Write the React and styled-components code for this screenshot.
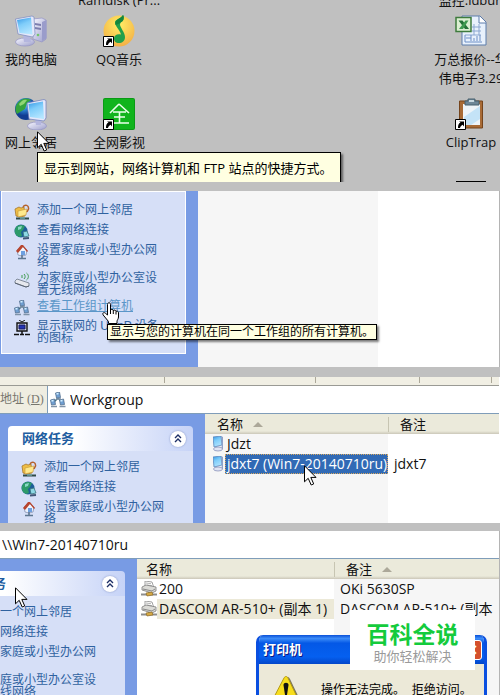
import styled, { createGlobalStyle } from 'styled-components';

const GlobalStyle = createGlobalStyle`
  * {
    box-sizing: border-box;
  }

  body {
    margin: 0;
    background: #c0c0c0;
    color: #111;
    font-family: "Open Sans", "Noto Sans CJK SC", sans-serif;
    font-size: 13px;
  }

  svg {
    display: block;
    flex: none;
  }
`;

const song = '"Liberation Sans", "Noto Sans CJK SC", sans-serif';

const Page = styled.main`
  display: flex;
  flex-direction: column;
  overflow: hidden;
`;

/* desktop */

const Desktop = styled.section`
  position: relative;
  display: flex;
  height: 182px;
  margin-bottom: 9px;
  overflow: hidden;
`;

const IconColumn = styled.div`
  display: flex;
  flex: none;
  flex-direction: column;
  width: ${(props) => props.$width}px;
  margin-left: ${(props) => (props.$last ? 'auto' : '0')};
  margin-right: ${(props) => (props.$last ? '-13px' : '0')};
`;

const CutLabel = styled.div`
  display: flex;
  flex: none;
  align-items: flex-end;
  justify-content: center;
  height: 15px;
  padding-bottom: 5px;
  line-height: 19px;
  white-space: nowrap;
`;

const Shortcut = styled.button`
  position: relative;
  display: flex;
  flex: none;
  flex-direction: column;
  align-items: center;
  gap: 3px;
  height: 83px;
  padding: 0;
  border: 0;
  background: none;
  color: inherit;
  font: inherit;
  line-height: 19px;
  white-space: nowrap;
`;

const Tooltip = styled.div`
  position: absolute;
  left: ${(props) => props.$x}px;
  top: ${(props) => props.$y}px;
  padding: ${(props) => (props.$large ? '6px 8px 8px 6px' : '0 2px')};
  border: 1px solid #000;
  background: #ffffe1;
  box-shadow: 2px 2px 2px rgba(0, 0, 0, 0.5);
  color: #000;
  font-family: ${(props) => (props.$large ? 'inherit' : song)};
  font-size: ${(props) => (props.$large ? 13 : 12)}px;
  line-height: ${(props) => (props.$large ? 19 : 14)}px;
  white-space: nowrap;
`;

const Pointer = styled.span`
  position: absolute;
  left: ${(props) => props.$x}px;
  top: ${(props) => props.$y}px;
  pointer-events: none;
`;

/* explorer windows */

const Explorer = styled.section`
  position: relative;
  height: ${(props) => props.$height}px;
  margin-bottom: ${(props) => props.$gap}px;
  border-right: 1px solid ${(props) => (props.$edge ? '#b4b4b4' : '#fff')};
  background: #fff;
  overflow: hidden;
`;

const Columns = styled.div`
  display: flex;
  height: 100%;
`;

const Sidebar = styled.aside`
  flex: none;
  width: ${(props) => props.$width}px;
  margin-left: ${(props) => props.$shift || 0}px;
  padding: ${(props) => props.$pad};
  background: #789be4;
`;

const Card = styled.div`
  border-radius: 4px 4px 0 0;
  overflow: hidden;
`;

const CardHead = styled.header`
  display: flex;
  align-items: center;
  justify-content: space-between;
  height: 25px;
  padding: 0 7px 0 14px;
  background: linear-gradient(90deg, #fff 35%, #c6d3f7);
`;

const CardTitle = styled.h2`
  margin: 0;
  color: #215da0;
  font: bold 13px/25px ${song};
`;

const Collapse = styled.button`
  display: flex;
  align-items: center;
  justify-content: center;
  width: 16px;
  height: 16px;
  padding: 0;
  border: 0;
  border-radius: 50%;
  background: #fff;
  box-shadow: 0 0 2px #7f8fc0;
`;

const TaskList = styled.ul`
  display: flex;
  flex-direction: column;
  gap: 4px;
  margin: 0;
  padding: ${(props) => (props.$open ? '12px 20px 9px 12px' : '10px 22px 10px 13px')};
  border: ${(props) => (props.$open ? '1px solid #fff' : '0')};
  background: #d6dff7;
  list-style: none;
`;

const Task = styled.a`
  display: flex;
  gap: 7px;
  min-height: 16px;
  color: ${(props) => (props.$hot ? '#5a96c8' : '#2f62a0')};
  font: 12px/12px ${song};
  text-decoration: ${(props) => (props.$hot ? 'underline' : 'none')};
`;

const SortedArea = styled.div`
  width: 180px;
  background: #f6f6f6;
`;

const Toolbar = styled.div`
  display: flex;
  height: 9px;
  border-bottom: 1px solid #9a9a94;
  background: #f1efe4;
`;

const ToolGroup = styled.span`
  flex: none;
  width: ${(props) => props.$width}px;
  height: 6px;
  border-right: 1px solid #aca899;
`;

const AddressBar = styled.label`
  display: flex;
  align-items: stretch;
  height: 28px;
  background: #efede1;
  border-bottom: 1px solid #7f9db9;
`;

const AddressLabel = styled.span`
  flex: none;
  width: 47px;
  color: #77766e;
  font: 12px/26px "Liberation Serif", "Noto Sans CJK SC", serif;
  white-space: nowrap;
`;

const AddressBox = styled.span`
  display: flex;
  flex: 1;
  align-items: center;
  gap: 4px;
  padding-left: 2px;
  border-left: ${(props) => (props.$plain ? '0' : '1px solid #7f9db9')};
  background: #fff;
`;

const AddressInput = styled.input`
  flex: 1;
  min-width: 0;
  padding: 0;
  border: 0;
  outline: 0;
  background: none;
  color: #111;
  font: 14px/20px "Open Sans", sans-serif;
`;

const FileTable = styled.table`
  width: 100%;
  border-collapse: collapse;
  table-layout: fixed;
  font-size: 14px;
  line-height: 20px;
  white-space: nowrap;

  th {
    height: 20px;
    padding: 0 0 0 ${(props) => props.$inset}px;
    background: linear-gradient(#ebeadb 85%, #cbc7b8);
    font-size: 13px;
    font-weight: normal;
    line-height: 19px;
    text-align: left;
  }

  th + th {
    padding: 0;
  }

  td {
    height: 20px;
    padding: 0;
    overflow: hidden;
  }

  td + td {
    padding-left: 6px;
  }
`;

const ListArea = styled.div`
  flex: 1;
  min-width: 0;
  background: ${(props) =>
    props.$sortFirst
      ? 'linear-gradient(90deg, #f6f6f6 183px, #fff 183px)'
      : 'linear-gradient(90deg, #fff 197px, #f6f6f6 197px)'};
`;

const HeadCell = styled.span`
  display: flex;
  align-items: center;
  gap: 10px;
`;

const SecondHead = styled(HeadCell)`
  padding-left: 11px;
  border-left: 1px solid #c7c5b2;
  line-height: 15px;
`;

const SortArrow = styled.i`
  border: 5px solid transparent;
  border-top: 0;
  border-bottom-color: #aca899;
`;

const FileName = styled.span`
  display: flex;
  align-items: center;
  padding-left: ${(props) => props.$indent}px;
`;

const NameText = styled.span`
  flex: 1;
  padding-left: 1px;
  border: 1px ${(props) => (props.$selected ? 'dotted #d8a860' : 'solid transparent')};
  background: ${(props) =>
    props.$selected ? '#316ab5' : props.$dim ? '#ece9d8' : 'transparent'};
  color: ${(props) => (props.$selected ? '#fff' : '#111')};
  line-height: 18px;
`;

/* printer message */

const Dialog = styled.div`
  position: absolute;
  left: 256px;
  top: 104px;
  width: 231px;
  height: 90px;
  border: solid #0a4fe0;
  border-width: 0 3px;
  border-radius: 7px 7px 0 0;
  background: #ece9d8;
  overflow: hidden;
`;

const DialogTitle = styled.div`
  display: flex;
  align-items: center;
  justify-content: space-between;
  height: 29px;
  padding: 0 2px 0 4px;
  background: linear-gradient(#0a50d8, #3c8cf8 12%, #0458e6 28%, #0560f0 75%, #0346c8);
  color: #fff;
  font: bold 13px/29px ${song};
  text-shadow: 1px 1px #0a1883;
`;

const Close = styled.button`
  width: 20px;
  height: 20px;
  padding: 0;
  border: 1px solid #fff;
  border-radius: 3px;
  background: #d4502c;
  color: #fff;
  font: bold 18px/16px ${song};
`;

const DialogBody = styled.div`
  display: flex;
  gap: 20px;
  padding: 12px 12px 0;
  color: #000;
  font: 12px/28px ${song};
  white-space: pre;
`;

const Brand = styled.div`
  position: absolute;
  right: 24px;
  top: 79px;
  display: flex;
  flex-direction: column;
  align-items: center;
  width: 125px;
  height: 60px;
  padding-top: 9px;
  background: #fff;
  color: #9a9a9a;
  font: 13px/18px "Noto Sans CJK SC", sans-serif;
  white-space: nowrap;

  strong {
    color: #14cb3c;
    font-size: 23px;
    font-weight: bold;
    line-height: 28px;
  }
`;

/* drawings */

const ShortcutMark = () => (
  <g>
    <path d="M.5 21.500h10v10H.5z" fill="#fff" stroke="#000" />
    <path d="M3 30c0-3 .6-4.500 2.500-5.500L4 23.500h5v5l-1.400-1.800C6 27.500 5.300 28.500 5 30z" fill="#000" />
  </g>
);

const Gradients = () => (
  <svg width="0" height="0" style={{ position: 'absolute' }} aria-hidden="true">
    <defs>
      <linearGradient id="screen" x1=".2" x2=".6" y2="1">
        <stop offset="0" stopColor="#3f9fe8" />
        <stop offset=".4" stopColor="#7fcdfa" />
        <stop offset="1" stopColor="#b5e6ff" />
      </linearGradient>
      <linearGradient id="shell" x2="1" y2="1">
        <stop offset="0" stopColor="#f7f7ff" />
        <stop offset="1" stopColor="#9c9ecb" />
      </linearGradient>
      <radialGradient id="globe" cx=".4" cy=".3">
        <stop offset="0" stopColor="#8fd4ff" />
        <stop offset=".5" stopColor="#2b82d2" />
        <stop offset="1" stopColor="#123c92" />
      </radialGradient>
      <radialGradient id="sun" cx=".5" cy=".3" r=".7">
        <stop offset="0" stopColor="#ffee66" />
        <stop offset="1" stopColor="#f3b046" />
      </radialGradient>
    </defs>
  </svg>
);

const ComputerIcon = () => (
  <svg width="32" height="32" viewBox="0 0 32 32">
    <path d="M18 4l9-1 4 2v19l-4 3-9-3z" fill="url(#shell)" stroke="#9494c4" strokeWidth=".7" />
    <path d="M27 7v19l4.500-3V5z" fill="#9a9ccb" />
    <path d="M20 8l6 1v2l-6-1zM20 12l6 1v2l-6-1z" fill="#7c7eae" />
    <circle cx="23" cy="20" r="1.300" fill="#74c66a" />
    <ellipse cx="10" cy="27" rx="9.500" ry="4" fill="url(#shell)" stroke="#9494c4" strokeWidth=".7" />
    <path d="M8 20l7 1 1 6H9z" fill="#b4b6de" />
    <path d="M.5 4L17 1l2 1 1 17-2.500 3L3 19z" fill="#e5e8fa" stroke="#7988bd" strokeWidth=".7" />
    <path d="M2 5l14-2.500 1.500 17L4.500 18z" fill="url(#screen)" />
  </svg>
);

const NeighborIcon = () => (
  <svg width="32" height="32" viewBox="0 0 32 32">
    <circle cx="11" cy="11" r="11" fill="url(#globe)" />
    <path d="M2 6c3-5 9-7 14-4l-4 3-2 6-5 3-3 2C0 13 0 9 2 6z" fill="#36a33c" />
    <path d="M4 6c3-4 5-5 8-4l-3 4-4 2z" fill="#91d672" />
    <ellipse cx="22" cy="28" rx="9.500" ry="4" fill="url(#shell)" stroke="#9494c4" strokeWidth=".7" />
    <path d="M20 21h7l-1 6h-5z" fill="#b4b6de" />
    <path d="M12 5L29 1.500l2 1V20l-2 3-15-2z" fill="#e5e8fa" stroke="#6a7ab8" strokeWidth=".7" />
    <path d="M13.500 6L28 3.500 29 21l-14-2z" fill="url(#screen)" />
  </svg>
);

const MusicIcon = () => (
  <svg width="32" height="32" viewBox="0 0 32 32">
    <circle cx="16" cy="16" r="15.500" fill="url(#sun)" />
    <path
      d="M20 0c1 1 1 4 0 5.500-1 1.500-3 2-3 4 0 3 5 8 5 12.500 0 4-3 6-6 6-3.500 0-5-2-5-4.500 0-3 3-5 7-4C17 15 12 11 12 7.500 12 4 18 4 20 0z"
      fill="#22a04b"
    />
    <path d="M20 0c1 1 1 4 0 5.500-1 1.500-3 1.500-3.500 3L12.500 10C11 4 18 4 20 0z" fill="#14853d" />
    <ShortcutMark />
  </svg>
);

const VideoIcon = () => (
  <svg width="32" height="32" viewBox="0 0 32 32">
    <rect width="32" height="32" rx="2" fill="#0a9a15" />
    <rect x="1" y="1" width="30" height="30" rx="1" fill="#10b41c" />
    <path d="M16 6L7 15M16 6l10 9M10 14h13M11 19h11M7 25h19M16.500 14v11" fill="none" stroke="#eaffea" strokeWidth="1.600" />
    <ShortcutMark />
  </svg>
);

const SheetIcon = () => (
  <svg width="32" height="32" viewBox="0 0 32 32">
    <path d="M7 1h18l6 6v23H7z" fill="#e8f1fc" stroke="#5d7cab" />
    <path d="M24 1v7h7" fill="#fff" stroke="#5d7cab" />
    <path d="M17 12h9M17 16h9M10 20h16M19 9v11M24 9v11" stroke="#8ba7d0" />
    <path d="M10 27h17M11 23h5M10 20v7M16 26v-6M19 26v-3M22 26v-5M25 26v-6" stroke="#6d8fc6" />
    <path d="M1 2.500h15v14H1z" fill="#dcefd2" stroke="#3e7b3d" strokeWidth="1.500" />
    <path d="M3.500 5.500h4l6.500 8.500h-4z" fill="#267238" />
    <path d="M13.500 5.500h-3L4 14h4z" fill="#3f9950" />
  </svg>
);

const ClipIcon = () => (
  <svg width="32" height="32" viewBox="0 0 32 32">
    <path d="M4.500 3h23v27h-23z" fill="#a86a35" stroke="#75441c" />
    <path d="M8 6h17v21H8z" fill="#eef4f8" />
    <path d="M9 19L25 8v13l-9 6H9z" fill="#c4e3f7" />
    <path d="M10 3h3V1h7v2h4v4H10z" fill="#6e8797" stroke="#46606f" />
    <path d="M14 2h5v2h-5z" fill="#c8d8df" />
    <ShortcutMark />
  </svg>
);

const CutIcon = () => (
  <svg width="30" height="8" viewBox="0 0 30 8">
    <path d="M0 0h30" stroke="#000" strokeWidth="2" />
    <path d="M0 1.500h30" stroke="#000" strokeDasharray="2 2" />
  </svg>
);

const Arrow = () => (
  <svg width="13" height="21" viewBox="0 0 13 21">
    <path d="M.5.800v16l3.700-3.500 3 6.700 2.500-1.100-2.900-6.500h5.200z" fill="#fff" stroke="#000" />
  </svg>
);

const Hand = () => (
  <svg width="18" height="22" viewBox="0 0 18 22">
    <path
      d="M5.500 13V2.500c0-2.300 3-2.300 3 0V8c.5-1 2.700-.8 2.800.6.800-.9 2.500-.5 2.700.8 1-.7 2.500 0 2.500 1.400V15c0 2-1.500 3-1.500 4.500v2H6.500v-2L1.200 13c-1.200-2 .8-3.200 2.300-1.700z"
      fill="#fff"
      stroke="#000"
    />
    <path d="M8.500 8v4M11.300 8.500V12M14 9.500v3" stroke="#000" />
  </svg>
);

const Chevrons = () => (
  <svg width="8" height="9" viewBox="0 0 8 9">
    <path d="M1 4l3-3 3 3M1 8l3-3 3 3" fill="none" stroke="#1d2f66" strokeWidth="1.400" />
  </svg>
);

const FolderIcon = () => (
  <svg width="16" height="16" viewBox="0 0 16 16">
    <path d="M1 5l4-2 2 1 3-1 1 9-5 1-4-1z" fill="#eebd45" stroke="#a7772b" strokeWidth=".8" />
    <path d="M4 7l9-2-1 6-8 2z" fill="#ffe98c" stroke="#c59638" strokeWidth=".6" />
    <path d="M9 3c2-3 6-2 5.500 2L13 8" fill="none" stroke="#b5622d" strokeWidth="1.500" />
    <path d="M2 14.500h13" stroke="#2f4a48" strokeWidth="2" />
    <path d="M6 14h5" stroke="#6ea3a0" strokeWidth="1.500" />
  </svg>
);

const GlobeIcon = () => (
  <svg width="16" height="16" viewBox="0 0 16 16">
    <circle cx="7" cy="7" r="6.500" fill="#1c5e98" />
    <path d="M2 3c3-3 6-2 9-1L9 6 7 8l1 4-3 1C0 11 0 6 2 3z" fill="#2d9a6a" />
    <path d="M4 3l4-1-1 3-3 1z" fill="#8ad8c4" />
    <path d="M9 8l4-1 2 5-5 1z" fill="#8ed8e4" stroke="#39747c" strokeWidth=".8" />
    <path d="M9 14.500l6-.5" stroke="#415677" strokeWidth="1.800" />
  </svg>
);

const HouseIcon = () => (
  <svg width="16" height="16" viewBox="0 0 16 16">
    <path d="M3 6l5-4 5 4-1 5-4 1-4-1z" fill="#edf3fc" stroke="#8592b2" strokeWidth=".8" />
    <path d="M7 7h4v4H7z" fill="#6d9fe0" />
    <path d="M2 7l5-6h2l5 6-1 1-4-5-5 6z" fill="#b8452e" />
    <path d="M8 11v4M4 14.500h8" stroke="#5d7690" strokeWidth="1.600" />
  </svg>
);

const WirelessIcon = () => (
  <svg width="16" height="16" viewBox="0 0 16 16">
    <path d="M1 9l2-2 12 4v3l-3 1L1 11z" fill="#e6e8ee" stroke="#6c7787" strokeWidth=".8" />
    <path d="M1 11l11 4 3-1" fill="none" stroke="#5b6472" />
    <path d="M8 3v3M10 2c1.500 1.500 1.500 3.500 0 5M12.500 1c2.500 2 2.500 5 0 7" fill="none" stroke="#3d9a4c" />
  </svg>
);

const GroupIcon = () => (
  <svg width="16" height="16" viewBox="0 0 16 16">
    <path d="M8 6l-4 4M8 6l4 4" stroke="#3f6f80" strokeWidth="1.500" />
    <path d="M5.500 1l4-1 1 5.500-4 .5z" fill="#6f9fd2" stroke="#54708f" strokeWidth=".8" />
    <path d="M.5 8l4-1 1 5.500-4 .5z" fill="#6f9fd2" stroke="#54708f" strokeWidth=".8" />
    <path d="M9.500 8l4-1 1 5.500-4 .5z" fill="#6f9fd2" stroke="#54708f" strokeWidth=".8" />
    <path d="M6.500 2l2-.5M1.500 9l2-.5M10.500 9l2-.5" stroke="#d3efff" strokeWidth="1.500" />
    <path d="M6 7h5M1 14.500h6M9.500 14.500h6" stroke="#7f93a8" strokeWidth="1.500" />
  </svg>
);

const DeviceIcon = () => (
  <svg width="16" height="16" viewBox="0 0 16 16">
    <path d="M5 0l3 2 3-2" fill="none" stroke="#111" />
    <path d="M3 3h10v8H3z" fill="#d8dce8" stroke="#111" strokeWidth="1.400" />
    <path d="M5 5h6v4H5z" fill="#2435b5" stroke="#181a60" />
    <path d="M8 11v3M0 14.500h5M6 14.500h4M11 14.500h5" stroke="#111" strokeWidth="1.500" />
  </svg>
);

const PeerIcon = () => (
  <svg width="12" height="16" viewBox="0 0 12 16">
    <path d="M0 1l8-1 1 9-8 2z" fill="url(#screen)" stroke="#5b87bd" strokeWidth=".8" />
    <path d="M8 0l2 1v12l-2 1 1-5z" fill="#8fa2ca" />
    <ellipse cx="5" cy="13" rx="4.500" ry="2" fill="#e0e4f3" stroke="#8087b2" strokeWidth=".7" />
  </svg>
);

const PrinterIcon = () => (
  <svg width="16" height="16" viewBox="0 0 16 16">
    <path d="M4 0l7 1 2 6-9-1z" fill="#fff" stroke="#8a8a8a" strokeWidth=".8" />
    <path d="M5 2l5 .7M6 4l5 .7" stroke="#a3a3a3" strokeWidth=".8" />
    <path d="M1 6l4-2 10 2v4l-4 2L1 9z" fill="#dbdbd7" stroke="#7c7c7c" strokeWidth=".8" />
    <path d="M2 8l9 2 3-2" fill="none" stroke="#8a8a8a" />
    <path d="M0 13.500h16M8 11v3" stroke="#8d8d8d" strokeWidth="1.800" />
    <path d="M5 12l6-1 1 3-6 1z" fill="#d6aa45" stroke="#8e6c2a" strokeWidth=".7" />
  </svg>
);

const WarningIcon = () => (
  <svg width="30" height="30" viewBox="0 0 30 30">
    <path d="M15 2c1.500-2 3-1 4 1l11 23c1 3 0 4-3 4H5z" fill="#77745e" />
    <path d="M13 2c1-2 3-2 4 0l11 23c1 3 0 4-3 4H4c-3 0-4-1-3-4z" fill="#f7dd1c" stroke="#b59a12" />
    <path d="M12.500 9c0-3 5-3 5 0L16 19h-2z" fill="#111" />
    <circle cx="15" cy="23" r="2" fill="#111" />
  </svg>
);

const tasks = [
  { icon: FolderIcon, text: '添加一个网上邻居' },
  { icon: GlobeIcon, text: '查看网络连接' },
  { icon: HouseIcon, text: '设置家庭或小型办公网络' },
  { icon: WirelessIcon, text: '为家庭或小型办公室设置无线网络' },
  { icon: GroupIcon, text: '查看工作组计算机' },
  { icon: DeviceIcon, text: '显示联网的 UPnP 设备的图标' },
];

function Tasks({ open, hot }) {
  return (
    <TaskList $open={open}>
      {tasks.map(({ icon: Icon, text }, index) => (
        <li key={text}>
          <Task href="#" $hot={index === hot}>
            <Icon />
            <span>{text}</span>
          </Task>
        </li>
      ))}
    </TaskList>
  );
}

function TaskCard() {
  return (
    <Card>
      <CardHead>
        <CardTitle>网络任务</CardTitle>
        <Collapse type="button" aria-label="折叠">
          <Chevrons />
        </Collapse>
      </CardHead>
      <Tasks />
    </Card>
  );
}

function FileList({ nameWidth, inset, sorted, rows, icon: Icon, indent }) {
  return (
    <FileTable $inset={inset}>
      <colgroup>
        <col width={nameWidth} />
        <col />
      </colgroup>
      <thead>
        <tr>
          <th>
            <HeadCell>名称{sorted === 0 && <SortArrow />}</HeadCell>
          </th>
          <th>
            <SecondHead>备注{sorted === 1 && <SortArrow />}</SecondHead>
          </th>
        </tr>
      </thead>
      <tbody>
        {rows.map((row) => (
          <tr key={row.name}>
            <td>
              <FileName $indent={indent}>
                <Icon />
                <NameText $selected={row.selected} $dim={row.dim}>
                  {row.name}
                </NameText>
              </FileName>
            </td>
            <td>{row.remark}</td>
          </tr>
        ))}
      </tbody>
    </FileTable>
  );
}

export default function App() {
  return (
    <Page>
      <GlobalStyle />
      <Gradients />

      <Desktop>
        <IconColumn $width={62}>
          <CutLabel />
          <Shortcut type="button">
            <ComputerIcon />
            我的电脑
          </Shortcut>
          <Shortcut type="button">
            <NeighborIcon />
            网上邻居
          </Shortcut>
        </IconColumn>
        <IconColumn $width={114}>
          <CutLabel>Ramdisk (Pr...</CutLabel>
          <Shortcut type="button">
            <MusicIcon />
            QQ音乐
          </Shortcut>
          <Shortcut type="button">
            <VideoIcon />
            全网影视
          </Shortcut>
        </IconColumn>
        <IconColumn $width={84} $last>
          <CutLabel>监控.ldbun</CutLabel>
          <Shortcut type="button">
            <SheetIcon />
            <span>
              万总报价--华
              <br />
              伟电子3.29
            </span>
          </Shortcut>
          <Shortcut type="button">
            <ClipIcon />
            ClipTrap
          </Shortcut>
          <Shortcut type="button">
            <CutIcon />
          </Shortcut>
        </IconColumn>
        <Tooltip $x={37} $y={152} $large>
          显示到网站，网络计算机和 FTP 站点的快捷方式。
        </Tooltip>
        <Pointer $x={37} $y={131}>
          <Arrow />
        </Pointer>
      </Desktop>

      <Explorer $height={176} $gap={10} $edge>
        <Columns>
          <Sidebar $width={198} $pad="0 12px 0 1px">
            <Tasks open hot={4} />
          </Sidebar>
          <SortedArea />
        </Columns>
        <Tooltip $x={107} $y={133}>
          显示与您的计算机在同一个工作组的所有计算机。
        </Tooltip>
        <Pointer $x={102} $y={111}>
          <Hand />
        </Pointer>
      </Explorer>

      <Explorer $height={146} $gap={8}>
        <Toolbar>
          <ToolGroup $width={165} />
          <ToolGroup $width={151} />
          <ToolGroup $width={104} />
          <ToolGroup $width={72} />
        </Toolbar>
        <AddressBar>
          <AddressLabel>
            地址 (<u>D</u>)
          </AddressLabel>
          <AddressBox>
            <GroupIcon />
            <AddressInput defaultValue="Workgroup" />
          </AddressBox>
        </AddressBar>
        <Columns>
          <Sidebar $width={205} $pad="12px 12px 0 8px">
            <TaskCard />
          </Sidebar>
          <ListArea $sortFirst>
            <FileList
              nameWidth={183}
              inset={12}
              sorted={0}
              icon={PeerIcon}
              indent={8}
              rows={[
                { name: 'Jdzt', remark: '' },
                { name: 'jdxt7 (Win7-20140710ru)', remark: 'jdxt7', selected: true },
              ]}
            />
          </ListArea>
        </Columns>
        <Pointer $x={304} $y={88}>
          <Arrow />
        </Pointer>
      </Explorer>

      <Explorer $height={164} $gap={0} $edge>
        <AddressBar>
          <AddressBox $plain>
            <AddressInput aria-label="地址" defaultValue="\\Win7-20140710ru" />
          </AddressBox>
        </AddressBar>
        <Columns>
          <Sidebar $width={205} $shift={-68} $pad="12px 12px 0 8px">
            <TaskCard />
          </Sidebar>
          <ListArea>
            <FileList
              nameWidth={197}
              inset={9}
              sorted={1}
              icon={PrinterIcon}
              indent={4}
              rows={[
                { name: '200', remark: 'OKi 5630SP' },
                { name: 'DASCOM AR-510+ (副本 1)', remark: 'DASCOM AR-510+ (副本', dim: true },
              ]}
            />
          </ListArea>
        </Columns>
        <Dialog role="dialog" aria-label="打印机">
          <DialogTitle>
            打印机
            <Close type="button" aria-label="关闭">
              ×
            </Close>
          </DialogTitle>
          <DialogBody>
            <WarningIcon />
            <span>操作无法完成。  拒绝访问。</span>
          </DialogBody>
        </Dialog>
        <Brand>
          <strong>百科全说</strong>
          助你轻松解决
        </Brand>
        <Pointer $x={15} $y={56}>
          <Arrow />
        </Pointer>
      </Explorer>
    </Page>
  );
}
